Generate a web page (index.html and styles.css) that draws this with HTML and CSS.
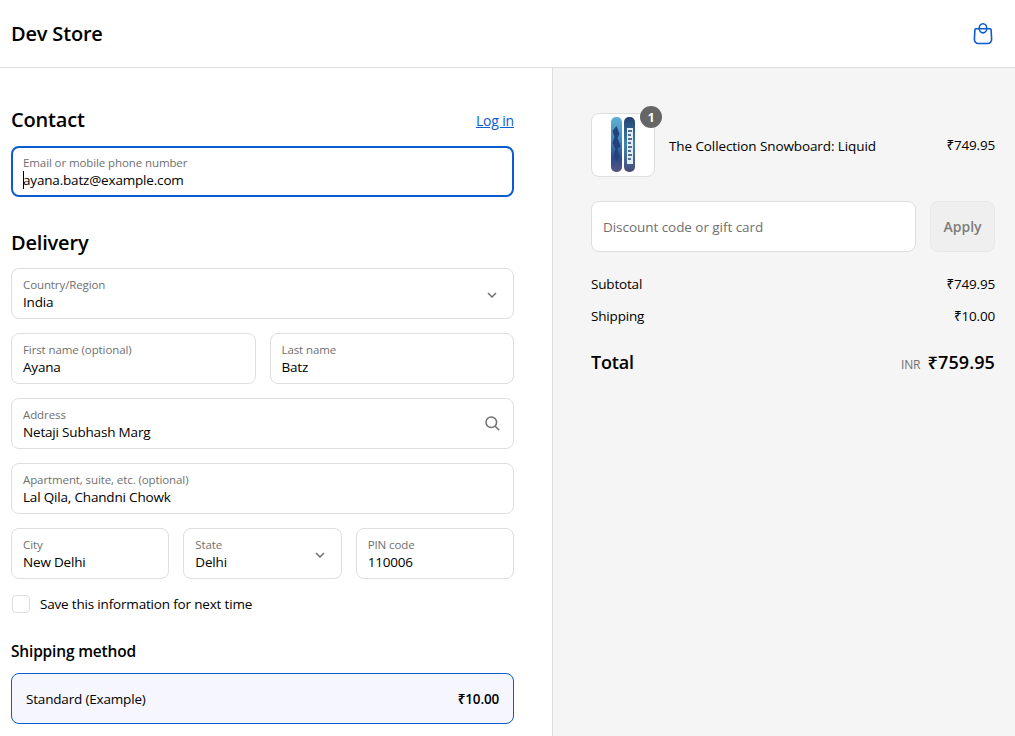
FILE: index.html
```html
<!DOCTYPE html>
<html lang="en">
<head>
    <meta charset="UTF-8">
    <meta name="viewport" content="width=device-width, initial-scale=1.0">
    <title>Checkout - Dev Store</title>
    <link rel="stylesheet" href="styles.css">
</head>
<body>

    <header class="topbar">
        <span class="store-name">Dev Store</span>
        <a class="bag-link" href="#" aria-label="Cart">
            <svg width="20" height="24" viewBox="0 0 20 24" fill="none" stroke="#0b5ccf" stroke-width="1.600">
                <path d="M2.800 6.800h14.400c.5 0 .9.400.9.900l.5 9.300c.1 2.600-1.500 4.500-4 4.500H5.400c-2.500 0-4.100-1.900-4-4.500l.5-9.300c0-.5.400-.9.900-.9z"/>
                <ellipse cx="10" cy="6.300" rx="3.800" ry="4.600"/>
            </svg>
        </a>
    </header>

    <div class="checkout">
        <form class="main-col">
            <div class="section-head">
                <h2>Contact</h2>
                <a class="login-link" href="#">Log in</a>
            </div>
            <div class="field field-focus">
                <label for="email">Email or mobile phone number</label>
                <input id="email" type="text" value="ayana.batz@example.com">
                <span class="text-caret"></span>
            </div>

            <h2 class="delivery-title">Delivery</h2>
            <div class="field-stack">
                <div class="field">
                    <label for="country">Country/Region</label>
                    <select id="country"><option>India</option></select>
                    <svg class="field-icon" width="10" height="6" viewBox="0 0 10 6" fill="none" stroke="#707070" stroke-width="1.500"><path d="M1 1l4 4 4-4"/></svg>
                </div>
                <div class="field-row">
                    <div class="field">
                        <label for="first">First name (optional)</label>
                        <input id="first" type="text" value="Ayana">
                    </div>
                    <div class="field">
                        <label for="last">Last name</label>
                        <input id="last" type="text" value="Batz">
                    </div>
                </div>
                <div class="field">
                    <label for="address">Address</label>
                    <input id="address" type="text" value="Netaji Subhash Marg">
                    <svg class="field-icon search-icon" width="15" height="15" viewBox="0 0 15 15" fill="none" stroke="#707070" stroke-width="1.500"><circle cx="6.300" cy="6.300" r="5.300"/><path d="M10.200 10.200l4 4"/></svg>
                </div>
                <div class="field">
                    <label for="apt">Apartment, suite, etc. (optional)</label>
                    <input id="apt" type="text" value="Lal Qila, Chandni Chowk">
                </div>
                <div class="field-row field-row-3">
                    <div class="field">
                        <label for="city">City</label>
                        <input id="city" type="text" value="New Delhi">
                    </div>
                    <div class="field">
                        <label for="state">State</label>
                        <select id="state"><option>Delhi</option></select>
                        <svg class="field-icon" width="10" height="6" viewBox="0 0 10 6" fill="none" stroke="#707070" stroke-width="1.500"><path d="M1 1l4 4 4-4"/></svg>
                    </div>
                    <div class="field">
                        <label for="pin">PIN code</label>
                        <input id="pin" type="text" value="110006">
                    </div>
                </div>
            </div>

            <label class="save-row">
                <input type="checkbox">
                <span>Save this information for next time</span>
            </label>

            <h3>Shipping method</h3>
            <div class="ship-option">
                <span>Standard (Example)</span>
                <strong>₹10.00</strong>
            </div>
        </form>

        <aside class="summary">
            <div class="line-item">
                <div class="thumb">
                    <svg width="30" height="56" viewBox="0 0 30 56">
                        <defs>
                            <linearGradient id="boardA" x1="0" y1="0" x2="0" y2="1">
                                <stop offset="0" stop-color="#62aed2"/>
                                <stop offset="0.400" stop-color="#3f8cba"/>
                                <stop offset="0.750" stop-color="#2b4a8c"/>
                                <stop offset="1" stop-color="#57557f"/>
                            </linearGradient>
                            <linearGradient id="boardB" x1="0" y1="0" x2="0" y2="1">
                                <stop offset="0" stop-color="#24406f"/>
                                <stop offset="0.500" stop-color="#3f86ad"/>
                                <stop offset="1" stop-color="#4a4a78"/>
                            </linearGradient>
                        </defs>
                        <rect x="3" y="0" width="11" height="55" rx="5" fill="url(#boardA)"/>
                        <path d="M8.500 9l3 8-2 4 3 8-3 3 2 8-3 4-3-5 2-7-3-6 2-6-2-6z" fill="#24407f"/>
                        <rect x="16" y="0" width="11" height="55" rx="5" fill="url(#boardB)"/>
                        <rect x="19" y="11" width="6" height="36" fill="#e2edf2"/>
                        <path d="M20 14h4M20 18h3M20 22h4M20 26h3M20 30h4M20 34h3M20 38h4M20 42h3" stroke="#26447d" stroke-width="1.700"/>
                    </svg>
                    <span class="badge">1</span>
                </div>
                <span class="item-name">The Collection Snowboard: Liquid</span>
                <span class="price">₹749.95</span>
            </div>

            <div class="discount-row">
                <input type="text" placeholder="Discount code or gift card">
                <button type="button">Apply</button>
            </div>

            <div class="cost-line">
                <span>Subtotal</span>
                <span>₹749.95</span>
            </div>
            <div class="cost-line">
                <span>Shipping</span>
                <span>₹10.00</span>
            </div>
            <div class="total-line">
                <strong>Total</strong>
                <div class="total-amount">
                    <small>INR</small>
                    <strong>₹759.95</strong>
                </div>
            </div>
        </aside>
    </div>

</body>
</html>
```

FILE: styles.css
```css
* {
    box-sizing: border-box;
}
html, body {
    height: 100%;
}
body {
    margin: 0;
    font-family: "Open Sans", "Noto Sans", sans-serif;
    font-size: 13.5px;
    letter-spacing: -0.18px;
    color: #000;
    background: #fff;
    overflow: hidden;
}
.topbar {
    height: 68px;
    display: flex;
    align-items: center;
    justify-content: space-between;
    padding: 0 22px 0 11px;
    border-bottom: 1px solid #dedede;
}
.store-name {
    font-size: 20px;
    font-weight: 600;
}
.bag-link {
    display: flex;
}
.checkout {
    display: flex;
    height: 668px;
}
.main-col {
    width: 553px;
    padding: 32px 38px 0 11px;
    border-right: 1px solid #dedede;
}
.section-head {
    height: 40px;
    padding-bottom: 2px;
    display: flex;
    align-items: center;
    justify-content: space-between;
}
h2 {
    margin: 0;
    font-size: 20px;
    font-weight: 600;
}
.login-link {
    color: #0b5ccf;
    font-size: 14px;
    margin-top: 2px;
}
.delivery-title {
    margin: 31px 0 10px;
    line-height: 30px;
}
.field-stack {
    display: flex;
    flex-direction: column;
    gap: 14px;
}
.field-row {
    display: grid;
    grid-template-columns: 1fr 1fr;
    gap: 14px;
}
.field-row-3 {
    grid-template-columns: 1fr 1fr 1fr;
}
.field {
    position: relative;
    height: 51px;
    padding: 8px 11px 0;
    border: 1px solid #dedede;
    border-radius: 8px;
    background: #fff;
}
.field label {
    display: block;
    margin-bottom: -1px;
    font-size: 11.5px;
    letter-spacing: -0.1px;
    line-height: 16px;
    color: #707070;
}
.field input,
.field select {
    display: block;
    width: 100%;
    height: 19px;
    padding: 0;
    border: none;
    outline: none;
    background: none;
    font: inherit;
    letter-spacing: inherit;
    color: #000;
    appearance: none;
}
.field-focus {
    margin-top: 6px;
    border: 2px solid #0b5ccf;
    padding: 7px 10px 0;
}
.text-caret {
    position: absolute;
    left: 10px;
    top: 23px;
    width: 1px;
    height: 18px;
    background: #000;
}
.field-icon {
    position: absolute;
    right: 16px;
    top: 23px;
}
.search-icon {
    right: 13px;
    top: 17px;
}
.save-row {
    display: flex;
    align-items: center;
    gap: 10px;
    margin-top: 16px;
    margin-left: 1px;
    height: 18px;
}
.save-row input {
    appearance: none;
    width: 18px;
    height: 18px;
    margin: 0;
    background: #fff;
    border: 1px solid #dedede;
    border-radius: 4px;
}
h3 {
    margin: 27px 0 11px;
    font-size: 15.5px;
    line-height: 22px;
    font-weight: 600;
}
.ship-option {
    height: 51px;
    display: flex;
    align-items: center;
    justify-content: space-between;
    padding: 0 14px;
    border: 1px solid #0b5ccf;
    border-radius: 8px;
    background: #f5f6fe;
}
.ship-option strong {
    font-weight: 600;
}
.summary {
    flex: 1;
    padding: 45px 20px 0 38px;
    background: #f5f5f5;
}
.line-item {
    display: flex;
    align-items: center;
}
.thumb {
    position: relative;
    width: 64px;
    height: 64px;
    display: flex;
    align-items: center;
    justify-content: center;
    background: #fff;
    border: 1px solid #dedede;
    border-radius: 8px;
    margin-right: 14px;
}
.badge {
    position: absolute;
    top: -8px;
    right: -8px;
    width: 22px;
    height: 22px;
    display: flex;
    align-items: center;
    justify-content: center;
    border-radius: 50%;
    background: #666;
    color: #fff;
    font-size: 12px;
    font-weight: 700;
}
.item-name {
    flex: 1;
    padding-top: 1px;
    letter-spacing: -0.1px;
}
.discount-row {
    display: flex;
    gap: 14px;
    margin-top: 24px;
}
.discount-row input {
    flex: 1;
    min-width: 0;
    height: 51px;
    padding: 0 11px;
    border: 1px solid #dedede;
    border-radius: 8px;
    background: #fff;
    font: inherit;
    letter-spacing: -0.05px;
}
.discount-row input::placeholder {
    color: #707070;
}
.discount-row button {
    width: 65px;
    height: 51px;
    padding: 0;
    border: 1px solid #e8e8e8;
    border-radius: 8px;
    background: #efefef;
    color: #7d7d7d;
    font: inherit;
    font-size: 14px;
    font-weight: 600;
}
.cost-line {
    display: flex;
    justify-content: space-between;
    height: 32px;
    line-height: 32px;
}
.discount-row + .cost-line {
    margin-top: 16px;
}
.total-line {
    display: flex;
    justify-content: space-between;
    align-items: center;
    margin-top: 14px;
    height: 32px;
}
.total-line strong {
    font-size: 18px;
    font-weight: 600;
}
.total-amount strong {
    letter-spacing: 0.1px;
}
.total-amount small {
    font-size: 12px;
    color: #707070;
    margin-right: 4px;
}
```
